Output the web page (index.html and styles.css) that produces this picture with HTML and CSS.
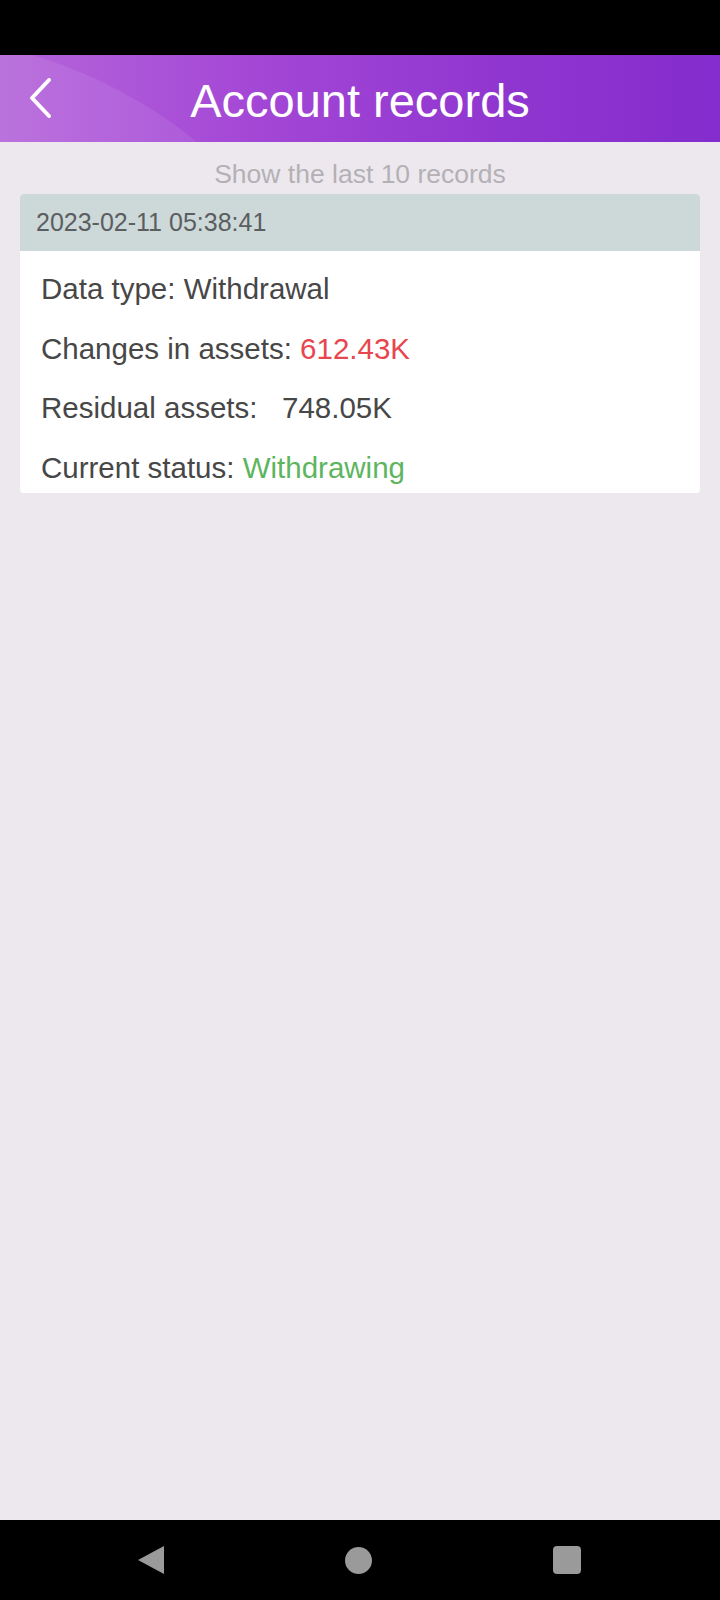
FILE: index.html
```html
<!DOCTYPE html>
<html lang="en">
<head>
  <meta charset="UTF-8" />
  <meta name="viewport" content="width=device-width, initial-scale=1.0"/>
  <title>Account records</title>
  <link rel="stylesheet" href="styles.css">
</head>
<body>
  <div class="status-bar"></div>

  <header class="top-bar">
    <span class="glow"></span>
    <a class="back" href="#" aria-label="Back">
      <svg width="26" height="42" viewBox="0 0 26 42">
        <path d="M22 3 L5 21 L22 39" fill="none" stroke="#fff" stroke-width="4" stroke-linecap="round" stroke-linejoin="round"/>
      </svg>
    </a>
    <h1>Account records</h1>
  </header>

  <main class="content">
    <p class="hint">Show the last 10 records</p>

    <section class="record">
      <div class="record-time">2023-02-11 05:38:41</div>
      <ul class="record-body">
        <li>Data type: Withdrawal</li>
        <li>Changes in assets: <span class="red">612.43K</span></li>
        <li>Residual assets:&nbsp;&nbsp; 748.05K</li>
        <li>Current status: <span class="green">Withdrawing</span></li>
      </ul>
    </section>
  </main>

  <nav class="nav-bar">
    <span class="nav-back"></span>
    <span class="nav-home"></span>
    <span class="nav-recent"></span>
  </nav>
</body>
</html>
```

FILE: styles.css
```css
body {
  margin: 0;
  width: 720px;
  height: 1600px;
  display: flex;
  flex-direction: column;
  background: #ece8ee;
  font-family: 'Liberation Sans', Arial, sans-serif;
  overflow: hidden;
}

.status-bar {
  height: 55px;
  background: #000;
}

.top-bar {
  position: relative;
  height: 87px;
  display: flex;
  align-items: center;
  justify-content: center;
  background: linear-gradient(90deg, #b566da 0%, #a447d6 35%, #9036d0 70%, #842ccd 100%);
  overflow: hidden;
}

/* soft light curve on the left side of the header */
.top-bar .glow {
  position: absolute;
  left: -569px;
  top: -19px;
  width: 938px;
  height: 938px;
  border-radius: 50%;
  background: rgba(255, 255, 255, 0.08);
  pointer-events: none;
}

.back {
  position: absolute;
  left: 27px;
  top: 22px;
  display: flex;
}

.top-bar h1 {
  position: relative;
  margin: 0 0 -3px;
  color: #fff;
  font-size: 47px;
  font-weight: normal;
}

.content {
  flex: 1;
  padding: 0 20px;
}

.hint {
  margin: 17px 0 0;
  text-align: center;
  color: #b4b0b6;
  font-size: 26.5px;
  line-height: 30px;
}

.record {
  margin-top: 5px;
  border-radius: 4px;
  overflow: hidden;
  background: #fff;
}

.record-time {
  height: 57px;
  line-height: 57px;
  padding-left: 16px;
  background: #cdd8d9;
  color: #5a5e60;
  font-size: 25px;
}

.record-body {
  list-style: none;
  margin: 0;
  padding: 14px 0 0 21px;
}

.record-body li {
  height: 59.5px;
  line-height: 47px;
  color: #474747;
  font-size: 29.5px;
}

.record-body li:last-child {
  height: 49.5px;
}

.red {
  color: #e8464e;
}

.green {
  color: #5db560;
}

.nav-bar {
  height: 80px;
  background: #000;
  display: flex;
  align-items: center;
  justify-content: space-between;
  padding: 0 139px 0 138px;
}

.nav-back {
  width: 0;
  height: 0;
  border-top: 14px solid transparent;
  border-bottom: 14px solid transparent;
  border-right: 26px solid #9a9a9a;
}

.nav-home {
  width: 27px;
  height: 27px;
  border-radius: 50%;
  background: #9a9a9a;
}

.nav-recent {
  width: 28px;
  height: 28px;
  border-radius: 4px;
  background: #9a9a9a;
}
```
